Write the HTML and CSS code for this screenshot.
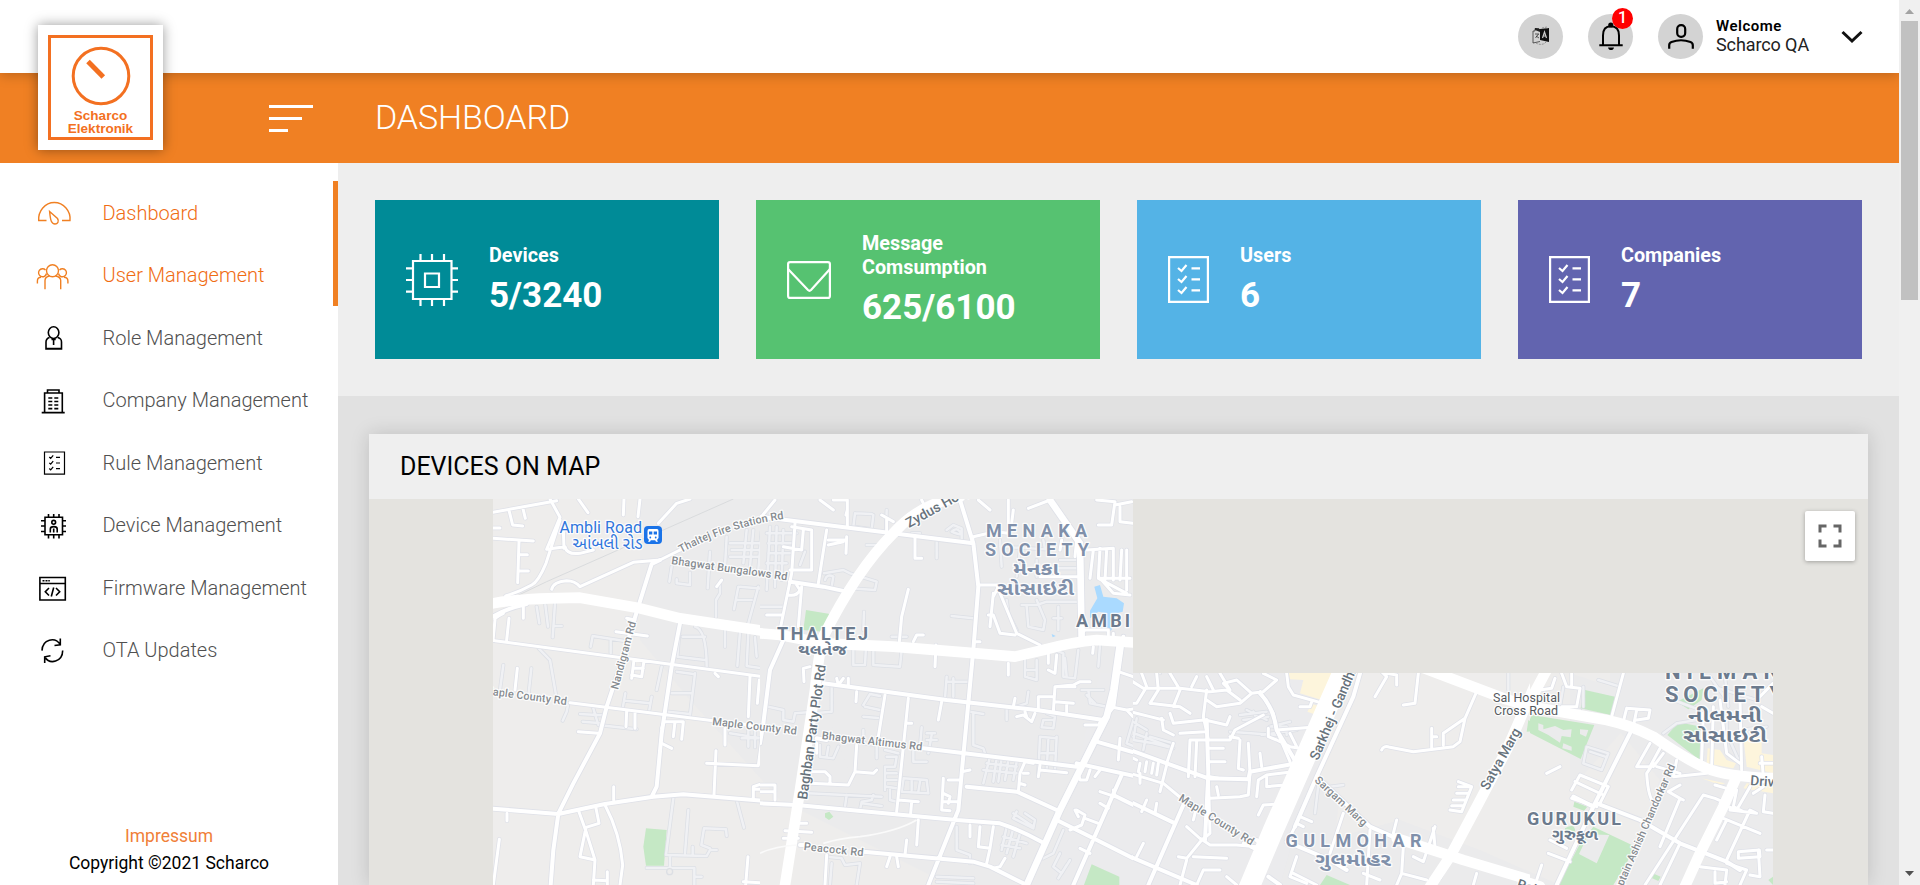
FILE: index.html
```html
<!DOCTYPE html>
<html lang="en">
<head>
<meta charset="utf-8">
<title>Dashboard</title>
<link rel="stylesheet" href="styles.css">
</head>
<body>
<div class="window">
<div class="app">
  <header class="topbar">
    <div class="round">
      <svg width="45" height="45" viewBox="0 0 45 45" fill="none" stroke="#222" stroke-width=".7">
        <path d="M22 15l9-1v14l-9-2z" fill="#111" stroke="none"/>
        <path d="M24.5 24l2-6 2 6M25.2 22h2.6" stroke="#ccc" stroke-width="1.2"/>
        <path d="M21 14.500h-4v2.500h-2v12l7-1.500M17 14.500l5 2M17 20h4M17.500 24l3-4M18 22l3 2" />
        <path d="M17 14l5 1v3l-5-2z" fill="#222" stroke="none"/>
        <path d="M24 14l5-1v2M18 29c3 2 8 2 10-1" stroke-dasharray="2 1" stroke="#777"/>
      </svg>
    </div>
    <div class="round">
      <svg width="45" height="45" viewBox="0 0 45 45" fill="none" stroke="#000" stroke-width="2">
        <circle cx="22.800" cy="11" r="1.600" fill="#000"/>
        <path d="M15 31V21.500C15 15 18 12.300 22.800 12.300S31 15 31 21.500V31M11.300 31.200H34.700"/>
        <path d="M20 33.500h6c-.5 2-1.500 2.500-3 2.500s-2.500-.5-3-2.500z" fill="#000" stroke="none"/>
      </svg>
      <span class="badge">1</span>
    </div>
    <div class="round">
      <svg width="45" height="45" viewBox="0 0 45 45" fill="none" stroke="#000" stroke-width="2.200">
        <rect x="19.200" y="11.200" width="8" height="11.600" rx="3.800"/>
        <path d="M11.200 34.700V31.200C11.200 29.500 12 28.600 13.500 28C19 26 27 26 32.500 28C34 28.600 34.800 29.500 34.800 31.200V34.700"/>
      </svg>
    </div>
    <div class="who"><b>Welcome</b><span>Scharco QA</span></div>
    <svg class="chev" width="22" height="14" viewBox="0 0 22 14" fill="none" stroke="#111" stroke-width="3"><path d="M1.500 2L11 11L20.500 2"/></svg>
  </header>
  <div class="titlebar">
    <div class="burger"><i></i><i></i><i></i></div>
    <h1>DASHBOARD</h1>
  </div>
  <div class="logo">
    <div class="logo-box">
      <svg width="60" height="60" viewBox="0 0 60 60" fill="none" stroke="#f37021">
        <circle cx="30" cy="30" r="27.800" stroke-width="3"/>
        <path d="M17 15.500L32.300 31" stroke-width="5"/>
      </svg>
      <span>Scharco</span><span>Elektronik</span>
    </div>
  </div>

  <div class="body">
    <aside class="side">
      <nav>
        <a class="on"><svg width="36" height="36" viewBox="0 0 36 36"><path d="M10.500 26.500H2.700C2 17 9 8.500 18.300 8.500S35 17 34 26.500H26"/><path d="M13.600 17.500L21.500 24.500C23.500 27.500 21.500 30 19 30C15.500 30 14.500 27 13.600 17.500Z"/></svg><span>Dashboard</span></a>
        <a class="on"><svg width="36" height="36" viewBox="0 0 36 36"><circle cx="16.500" cy="13.800" r="6"/><path d="M10.500 16.500A4 4 0 1 1 9.500 13M22.500 16.500A4 4 0 1 0 23.500 13M1.400 26.600V24C1.400 21 3 20.300 5 20.200M9 32.300V23.500C9 20.500 10.500 19.600 13.500 19M31.900 26.600V24C31.900 21 30 20.300 28 20.200M24.700 32.300V23.500C24.700 20.500 22.500 19.600 19.500 19"/></svg><span>User Management</span></a>
        <a><svg class="k" width="36" height="36" viewBox="0 0 36 36"><ellipse cx="17.600" cy="13.600" rx="5.300" ry="5.900"/><path d="M13.500 18.500C10.500 19.500 10 20.500 10 23V30H25.500V23C25.500 20.500 25 19.500 21.800 18.500M15.500 20.500h4.200M17.600 21v5M10 29.500H25.500"/></svg><span>Role Management</span></a>
        <a><svg class="k" width="36" height="36" viewBox="0 0 36 36"><path d="M8.600 30V11H26.300V30M11.500 11V8H23V11M5.700 30.600H28.700"/><path d="M12.300 16h4M18.300 16h4M12.300 19.500h4M18.300 19.500h4M12.300 23h4M18.300 23h4M12.300 26.600h4M18.300 26.600h4"/></svg><span>Company Management</span></a>
        <a><svg class="k thin" width="36" height="36" viewBox="0 0 36 36"><path d="M8.500 8H28.500V30.200H8.500Z"/><path d="M13.300 13l1.400 1.400 2.500-3M13.300 18.800l1.400 1.400 2.500-3M13.300 24.500l1.400 1.400 2.500-3M20 13.300h4M20 19h4M20 24.700h4"/></svg><span>Rule Management</span></a>
        <a><svg class="k" width="36" height="36" viewBox="0 0 36 36"><path d="M9 10.300H26.500V27.800H9ZM12.500 10V7M17.700 10V7M23 10V7M12.500 28v3.500M17.700 28v3.500M23 28v3.500M9 13.700H5M9 19H5M9 24.500H5M26.500 13.700h3.500M26.500 19h3.500M26.500 24.500h3.500"/><circle cx="17.700" cy="15.300" r="1.900"/><path d="M14.300 25.500V22C14.300 18.800 21.200 18.800 21.200 22V25.500M17.700 21.500v4"/></svg><span>Device Management</span></a>
        <a><svg class="k" width="36" height="36" viewBox="0 0 36 36"><path d="M3.900 8.500H29.300V31H3.900ZM3.900 14.500H29.300M6.500 11.700h2M9.500 11.700h2M12.300 11.700h1.500M13 19L9.300 22.700L13 26.500M20 19L23.700 22.700L20 26.500M17.700 18.500L15.300 27.500"/></svg><span>Firmware Management</span></a>
        <a><svg class="k" width="36" height="36" viewBox="0 0 36 36"><path d="M6 18.600C6.500 7 19 4.500 24.300 12.500M24.300 6.600V12.800L18.500 13.500M26.700 18.600C26.500 30 14 33 8.700 25M8.700 31V24.800L14.500 23.800"/></svg><span>OTA Updates</span></a>
      </nav>
      <footer><span class="imp">Impressum</span><span>Copyright ©2021 Scharco</span></footer>
    </aside>

    <main>
      <section class="cards">
        <div class="card teal">
          <svg width="52" height="52" viewBox="0 0 52 52" stroke-width="2.200"><path d="M7 7H45.500V45H7ZM19 19.500H33V33H19ZM14.500 7V0M26 7V0M38 7V0M14.500 45v7M26 45v7M38 45v7M7 14.300H0M7 26H0M7 37.700H0M45.500 14.300h6.500M45.500 26h6.500M45.500 37.700h6.500"/></svg>
          <div><p>Devices</p><strong>5/3240</strong></div>
        </div>
        <div class="card green">
          <svg width="44" height="38" viewBox="0 0 44 38" stroke-width="2.200"><rect x="1.100" y="1.100" width="41.800" height="35.800" rx="2"/><path d="M1 8L21 29Q22.500 30.500 24 29L43 8"/></svg>
          <div><p>Message<br>Comsumption</p><strong>625/6100</strong></div>
        </div>
        <div class="card blue">
          <svg width="41" height="47" viewBox="0 0 41 47" stroke-width="2.200"><path d="M1.100 1.100H39.900V45.900H1.100Z"/><path d="M10 12l3.500 3L18.500 9M10 23l3.500 3L18.500 20M10 34l3.500 3L18.500 31M23.500 12.300H32M23.500 23.300H32M23.500 34.300H32"/></svg>
          <div><p>Users</p><strong>6</strong></div>
        </div>
        <div class="card violet">
          <svg width="41" height="47" viewBox="0 0 41 47" stroke-width="2.200"><path d="M1.100 1.100H39.900V45.900H1.100Z"/><path d="M10 12l3.500 3L18.500 9M10 23l3.500 3L18.500 20M10 34l3.500 3L18.500 31M23.500 12.300H32M23.500 23.300H32M23.500 34.300H32"/></svg>
          <div><p>Companies</p><strong>7</strong></div>
        </div>
      </section>
      <section class="panel">
        <h2>DEVICES ON MAP</h2>
        <div class="map">
          <svg width="1499" height="386" viewBox="369 499 1499 386">
            <defs>
              <clipPath id="tiles"><path d="M493 499H1133V673H1773V885H493Z"/></clipPath>
              <clipPath id="ca"><path d="M493 499H760V885H493Z"/></clipPath>
              <clipPath id="cb"><path d="M760 499H1133V885H760Z"/></clipPath>
              <clipPath id="cc"><path d="M1133 673H1530V885H1133Z"/></clipPath>
              <clipPath id="cd"><path d="M1530 673H1773V885H1530Z"/></clipPath>
              <path id="thaltej" d="M681 553Q735 524 792 518"/>

              <path id="af" d="M430 795L420 870M514 805L506 880M536 745L570 780L588 885M530 620L538 670M556 615L564 680M585 610L578 712M580 678H605M692 740L698 708L790 722M752 722V760M905 800L890 870M796 880L788 925M796 902L870 910M875 890L868 930M625 910L620 935L608 962M660 942L725 946M668 965L725 970M700 925L715 975L830 988M960 672L952 770L1035 780M1005 680Q1040 690 1040 800M968 710H1035M1005 820L990 945M950 815L1000 822M935 880H995M925 935L990 942M1095 665V740M1140 695L1132 798M1165 700L1160 798L1225 808M1185 712L1190 770M1215 720V750M935 500L928 545M990 518V555L950 550V538M1050 455L1043 565M1080 545V580L1068 600V650M1135 560L1122 628M1130 600H1175M1195 560L1165 670M1100 410L1095 500M1160 390L1150 490M1180 390L1170 500M1205 395L1195 510M1110 430H1210M1115 450H1210M1110 470H1205M1225 520L1215 560M1140 560L1250 570M1225 910L1260 925M1130 1200L1152 1283M940 1195L918 1365L1040 1368L1050 1350H1070M985 1230L975 1360M998 1340V1362M1100 1308L1098 1288L1032 1285L1024 1335L1050 1345M860 1404H1003V1455M930 1370V1400M1003 1430H1025M1110 1000L1205 1015M1165 985V1040M1185 990V1042M1145 1015H1200"/>
              <path id="aw" d="M399 337L590 302M448 335L458 375L488 378M488 322L496 355M399 384H420M399 415L520 423M477 425L473 548M477 464H502M477 513H505M655 297L684 338M792 297L790 345M840 297L834 350M570 297L600 352L560 448L615 440Q620 465 660 460L700 450M600 360L558 490Q535 545 515 555Q480 575 437 588M610 390L612 445M990 297L950 310L895 370M1255 297L1215 345M575 568Q580 545 620 542Q645 542 660 560L820 487L900 480L960 450M430 640Q400 655 405 660L399 722M490 620V655M447 655L440 720M405 722L1225 832M768 695L862 708M800 655L825 660M472 805L465 870M630 908L1060 962M800 935L798 980M825 938V985M655 995L715 1000M822 780L815 835M852 782L845 830L815 825M820 805H850M905 985L912 965H970L965 1018M945 965L940 1010M905 1030L935 1045M1170 830L1165 950M1198 840L1192 910M1095 985V1035M1068 1052L1062 1185M1040 1090L1195 1097L1230 832M1070 560L1085 540M761 1160V1200M441 1240V1262M735 1215Q780 1300 788 1395L780 1455M655 1230L680 1300L705 1380L700 1455M708 1225L717 1270L678 1282L660 1370L705 1380M742 1415V1455M700 1440L742 1442M418 1318L400 1455M1164 1370L1157 1455M1150 1445L1255 1452M1225 650L1255 640M1180 1195V1160L1210 1150L1250 1160V1200M1180 1168H1250M1065 820L1075 830"/>
              <path id="am" d="M900 480L875 492L835 620L780 800L740 920L720 1000L640 1150L595 1241L580 1350L572 1455M960 670L935 800L905 1000L890 1160L875 1190M399 1226L595 1242L735 1212L880 1190L970 1183L1300 1210M1260 710L1225 832M399 650Q440 625 500 612"/>

              <path id="bf" d="M285 70L280 110L335 118L340 75M285 70L335 72M380 60L378 125M135 185L120 225M320 165L380 165M455 130H480M530 155V205M560 120L580 105L605 115V150M575 125Q590 110 600 125T575 125M192 250L250 240L270 250L350 275L345 300L270 295M195 270Q200 250 220 260L215 290M312 365L310 420M395 440H440M340 470V525L420 530L425 480M280 480V525L315 525L318 470M575 378L640 385M560 560L555 625M580 565V620M560 575H625M310 645L330 612L360 618M315 650L360 660M310 680L355 684M215 590V665L160 670M25 650L70 660V690L100 695L105 670L160 665M485 712L480 770M500 730H525M515 735L505 790M500 750H530M460 780V815H500M630 665L670 672M640 670V765L670 775L675 790M690 800L670 880M710 805L700 875M725 805L715 875M745 810L735 870M770 815L760 870M680 820L770 830M670 840L770 850M180 765V800L220 805L235 770M205 770L200 800M310 720V760L350 765V805M375 780L415 790M380 800H410L405 830H375M380 850H410M380 870H410M380 890L410 895M375 830V900M390 900V930L410 935M430 870L425 905L505 910L500 870L430 865M455 870V900M480 875L475 905M145 910L365 920M260 915L255 950M300 960L305 935L335 930L340 915M305 940L365 948M720 150L725 230M720 170L855 178L850 150M740 330L745 370L770 420M785 345H830L860 335H960M800 350L805 410L850 420L855 390L830 330M895 350V420M880 385H905M780 180L770 260M830 210V260M870 235H960M900 210H960M795 510V560L830 570V510M800 540H830M885 480L910 490V560L945 565L955 480M915 505L920 560M1020 465L1015 530M965 600H1030M985 600L990 640L1040 650M980 615L1005 640M740 650V690M770 650L800 640L805 605M860 670L885 680L880 715L845 712L850 690H880M840 740L835 850M890 740L885 840M840 740L890 745M865 750L860 840M845 790H885M590 1010V1080L630 1095V1120M200 1100L245 1105L255 1125L300 1120M215 1120L210 1185M300 1120L290 1185M530 1160L640 1165M530 1175L640 1180M760 970L820 1010M770 965L760 985L820 1015L825 990L795 970M740 1010L725 1080M760 1015L740 1090M780 1030L760 1100M730 1040L800 1060M725 1065L780 1075M910 1020L880 1090L850 1105M900 1090L880 1130L905 1150L930 1110M920 1125L895 1165M1120 690L1100 760L1150 780M1130 710L1175 725M1120 740L1160 750M30 110L20 300M50 110L45 290M70 120L65 270M20 130H110M25 160H100M25 190H90M20 220H80M0 350H70"/>
              <path id="bw" d="M45 30L0 85M180 30L220 60M220 30H262V110M262 60L258 75M365 75L400 95M380 85V125M465 140V205H485M485 30L495 50M200 120L175 280M260 140L258 190M205 150H260M205 165L250 155M105 100L95 250L60 420M95 110L155 120V240L90 240M130 120L125 180L70 170M110 285L120 300Q110 320 85 315M125 290L115 410M20 375H65M445 298L425 380L418 455M490 435H470L460 455M635 160L640 140L705 125L745 130L745 30M655 30L690 60M755 100L760 60M805 55L870 30M905 150L900 180M1010 30L1065 35L1055 105H1015M1065 45L1115 35M1080 50V95L1119 100M980 180L1060 175V270M1000 180L990 265M1020 175L1015 265L1100 310M1040 180L1035 270M1085 180L1080 270M1100 180V300M1020 265H1110M1020 265L1060 310L1110 315M655 285H710L770 430L840 465M685 375H700L720 430L765 435M700 310L690 410M715 290L700 320M840 260H965M945 200L950 150M965 430L975 420H1045V440M1060 430V450M645 455H660M528 465L525 530M132 575L130 535L150 530M745 520V555M865 480V520M890 495L885 550L865 540M1000 470L998 490M230 565L235 585L250 565M265 565V590M290 605L288 635M375 615L355 740M445 625L410 965M545 635L535 690M440 700H455M765 625L760 650M825 670L815 695L790 675L770 680M945 590H885L880 665M885 590L940 585L960 575H990M835 660V620H880M885 635L940 640M920 640V665M975 705H1020M1080 745L1075 810M170 760V790M290 765L285 845L265 885L150 880M285 845L340 850L350 840M150 845H195L210 860V880M0 885H45V930M0 905H45M550 865L545 960L570 962M565 870H600M550 910L570 920L565 940M550 935H595M605 845L630 840M415 930L475 935M455 935L452 970M820 820L795 815L780 850L775 905M840 825L835 860M840 840L920 848M780 880L795 885M805 850H790M795 665L800 680M118 1000H140M75 1022L155 1027M70 1045H115M475 990L470 1065M440 1050L435 1095M390 1100L380 1130M410 1100L415 1130M200 1095L195 1185M630 1005V1040M660 1010L655 1070L690 1075L700 1010M690 1075L680 1120M735 1105L720 1130L700 1135M955 850L960 870L980 870L990 840M1020 840L1005 860M950 960L975 975L965 1005L930 1020M945 960L955 980M1020 905L1065 920L1060 900M1020 940L1045 955M975 985L1015 1000M960 1075L990 1090M1170 930L1150 960M1145 1060L1120 1100M1075 545L1119 560L1155 590H1200M1130 600L1165 590L1190 620L1165 650L1100 660M1050 650L1100 660L1119 680L1200 690M1160 740L1140 800M1180 760L1160 830"/>
              <path id="bm" d="M0 80L640 160M90 275L190 290L260 305M600 30L640 160L655 290L640 480L605 850L595 960L575 1010L505 1185M190 580L560 630L830 660L1030 690M170 745L200 750M490 775L950 830M1010 755L1200 810M620 890L770 905L890 960M0 940L110 945L590 990L720 1000Q780 1020 850 1058M120 1065H140M310 1085L640 1115L690 1130L790 1180M70 450L30 540L10 700L0 760M950 820L1200 875M890 990L1000 1045L1200 1145M1060 915L1200 985M1085 855L940 1185M1090 440L1060 650L1020 700"/>
              <path id="bx" d="M870 30L960 160L965 445M1080 460L1060 600L1040 680L1000 760L900 960L800 1185"/>
              <path id="bl" d="M0 430L60 435M60 435L190 460L400 470L650 490L765 500L850 480Q940 455 1010 450L1125 458M600 20Q480 40 400 130Q290 240 190 440Q175 500 165 600L120 900L75 1185"/>

              <path id="cf" d="M300 275L440 285M330 225L410 215M340 240L415 230M350 210L410 240M370 215L380 235M420 260L480 245M395 285L500 270M0 240L50 270M0 275L120 320M20 235L10 300M50 280L40 330M60 290L130 310M70 310L130 325M10 300L70 310M90 40V100M1135 100V150M565 435L555 520M600 440L640 435M430 260H470V285"/>
              <path id="cw" d="M0 120L40 145L150 145L240 155L290 150L330 180M35 100L50 140L20 190H0M80 100L85 150L60 190M120 100L150 150L130 200M200 110L185 140M230 150L220 230L235 300M230 110L250 150M270 100L300 150L280 130L320 120L365 160L330 190L260 200L230 180M365 160L400 155L440 120L400 100M390 155L430 220L440 270L480 365M470 100L475 140L490 165L580 190M510 200H540L545 185M0 215L60 230L100 240M95 235L100 270L130 285M60 190L150 200L180 220M120 220L130 250L220 240M225 240L290 255L300 230M235 300H300L315 270L400 225M150 280L225 275M180 300L175 410M200 305L195 410M235 325H280M235 365H285M240 410L265 415M330 300L325 385L340 390M300 290L325 295M355 310L360 400L355 465L330 470L240 475M390 340L395 380M415 265V290L440 300L480 320L510 325L540 330M440 270L545 262M480 280L500 320M180 300H230M0 350L20 360M30 370L25 395M50 365L45 395M70 370L65 400M85 370L80 405M110 375L90 455M130 310L110 370M380 470L385 420L410 405L490 395M410 405V440L465 435M480 490L400 495L385 525M235 400L240 580L215 600L170 560M200 500L190 540M265 465L260 440M740 80L770 110L735 170M770 100L800 105V135M865 100L855 190L820 195M755 330Q760 315 780 322L850 335L970 320L990 305L1005 235M1005 235L1040 155M1005 235L940 280V315M905 265V325M905 290H920M985 425L1025 440L995 515L960 510M985 440H1020M980 460H1015M970 480H1005M965 497H1000M800 540L790 580M640 520L600 640M510 530L545 545M500 550L520 560M720 570L710 735M700 700L750 720M820 620L815 700L890 720M815 700L800 735M850 650L880 665L915 560M910 565L915 620M930 715L960 650M1040 700L1030 735M0 400L100 430L160 480M30 400V430M50 480L35 515M80 490L75 520M40 610L20 650M210 595L240 615H320L380 620M215 600L170 655L145 650M190 650L290 655M170 660L150 735M220 690H270M220 690L200 735M290 710L320 735M340 610L380 630M490 700L560 735M500 650L480 710L530 730M500 550L480 590"/>
              <path id="cm" d="M0 330L110 370L235 415L355 418L360 395L500 370M0 485L135 550M160 495L55 735M0 650L200 735M390 160Q430 200 440 270L500 370M380 600L400 620M470 605L600 660L650 690M230 240L235 400L225 600M415 710L450 735"/>
              <path id="cx" d="M690 100L670 170L560 410L495 560M560 410L720 560L800 595L960 650"/>

              <path id="df" d="M90 520L85 580M355 540L420 560M310 560V620M320 740L385 760L365 810L310 790ZM330 755L375 770M690 530L740 600M700 560L830 600M740 640V700L780 790M735 530L745 620M780 690L860 680M550 700L590 670L650 660M250 560L240 620L300 630M580 600L660 630"/>
              <path id="dw" d="M225 535L215 565L180 570M245 520L260 560L300 565L290 620L245 620M275 520V560M440 625L510 630L505 655L470 660M440 625L430 665M470 630L460 680M430 520L395 650M700 620L695 800M670 640L665 780M720 600L740 760L780 790M780 600L785 810M845 620L879 640M830 600L879 550M845 770L850 830M840 790H879M300 825L385 860L360 910M300 825L275 870M285 845L370 885M275 895L350 920M510 730L470 800H510L540 745M520 790L500 820Q505 900 525 910M590 780L580 830L680 820M530 800L600 820M520 800L550 760M600 855L565 875L600 895L540 1040M670 885L705 895L740 910M670 885L495 1155M600 895L610 900M730 955L840 1000M705 855L740 865M810 860L770 930L720 910M750 930L830 940L810 930L740 1080M710 1020L740 960M770 870L760 920L790 935M820 880L850 860M855 885L850 935L879 940M660 1100L740 1110L735 1155M705 1115V1150L740 1145M775 1075L840 1070L838 1050L775 1055ZM835 1050L840 1130L810 1125M860 1050H879M740 1090L800 1110L780 1155M600 1030L540 1155M205 1060L270 1085M210 1020L260 1045M185 1095L170 1140M200 820L240 800"/>
              <path id="dm" d="M450 700L340 920L230 1155M350 910L480 960L600 1030L740 1085L780 1110M0 1040L60 1020M280 890L340 920"/>
            </defs>

            <g clip-path="url(#tiles)">
              <path d="M493 499H1773V885H493Z" fill="#eeedec"/>
              <path d="M640 499H1133V640L1340 790L1330 885H950L780 800L690 700L640 640Z" fill="#ebebec"/>
              <path d="M760 499H1133V800H860L830 720H760Z" fill="#ebebec"/>
              <path d="M1100 673H1345L1290 885H1050Z" fill="#ebebed"/>
              <path d="M1610 673H1773V885H1620L1660 780L1610 720Z" fill="#ebebec"/>
              <path d="M1290 850L1400 820L1480 850L1560 885H1280ZM1570 673L1650 700L1570 790Z" fill="#ebebec"/>
            </g>

            <g clip-path="url(#ca)"><g transform="translate(360 400) scale(.33333)">
              <path class="park" d="M858 1285L920 1290L912 1397H858L850 1340Z"/>
              <path d="M399 622L560 545L1120 297" fill="none" stroke="#d9dbdd" stroke-width="3"/>
              <use href="#af" class="r fc"/><use href="#af" class="r ff"/>
              <use href="#aw" class="r wc"/><use href="#am" class="r mc"/>
              <use href="#aw" class="r wf"/><use href="#am" class="r mf"/>
              <path class="r lf" d="M399 610Q480 595 660 593L840 625L960 655L1260 700"/>
              <path class="r wf" d="M960 450L1040 415M1060 962L1255 985"/>
              <circle cx="929" cy="1415" r="9" fill="#eeedec" stroke="#dcdfe4" stroke-width="4"/>
            </g></g>

            <g clip-path="url(#cb)"><g transform="translate(760 490) scale(.33333)">
              <path class="park" d="M138 360L210 372L190 425L130 420ZM195 970L208 965L220 980L207 990L195 982ZM995 1123L1078 1160V1190H970Z"/>
              <path d="M1003 290L1020 285L1030 320L1070 325L1092 340L1088 365L1060 372L1055 420L1045 425L1030 410L1040 370L1015 365L990 385V362L1012 325Z" fill="#aadaff"/>
              <path d="M875 432L887 438L878 442Z" fill="#aadaff"/>
              <use href="#bf" class="r fc"/><use href="#bf" class="r ff"/>
              <use href="#bw" class="r wc"/><use href="#bm" class="r mc"/><use href="#bx" class="r xc"/>
              <use href="#bw" class="r wf"/><use href="#bm" class="r mf"/><use href="#bx" class="r xf"/>
              <use href="#bl" class="r lf"/>
              <path d="M0 1090Q40 1070 110 1065M190 1060Q240 1045 300 1040Q410 1025 470 990" fill="none" stroke="#fafafa" stroke-width="5"/>
            </g></g>

            <g clip-path="url(#cc)"><g transform="translate(1130 640) scale(.33333)">
              <path d="M475 99H615L575 180L510 160L520 120L480 118ZM545 192L575 200L560 225L532 215Z" fill="#fdf5dc"/>
              <path class="park" d="M590 705L660 735H570ZM1195 240L1250 270L1190 275Z"/>
              <use href="#cf" class="r fc"/><use href="#cf" class="r ff"/>
              <use href="#cw" class="r wc"/><use href="#cm" class="r mc"/><use href="#cx" class="r mc"/>
              <use href="#cw" class="r wf"/><use href="#cm" class="r mf"/><use href="#cx" class="r mf"/>
              <path class="r gf" d="M655 60L540 320L430 570L350 760"/>
              <path class="r lf" d="M870 80L1120 175L1200 200M1230 100L1130 330L1040 500L960 650L900 740M800 595L1000 660L1200 720"/>
            </g></g>

            <g clip-path="url(#cd)"><g transform="translate(1480 500) scale(.33333)">
              <path class="park" d="M315 570L405 590L392 645L302 625ZM155 645L343 675L302 777L137 692ZM590 605L620 590L670 565L665 600L625 628ZM562 705L595 667L665 680L662 782ZM283 905L322 920L312 932L280 920ZM340 980L462 1038L440 1090L400 1155H235L295 1040ZM515 1118L542 1130L535 1143L510 1132ZM80 1150H130L120 1160H75ZM255 985Q290 965 285 1005L255 1005ZM865 1140L879 1130V1155Z"/>
              <path d="M175 670L190 675V688L225 678L250 690L275 688L272 712L245 708L240 728L205 705L175 690ZM300 688L325 690L318 710L300 702ZM250 730L275 740V752L247 745Z" fill="#ebebec"/>
              <path d="M325 1003L388 1005L350 1090L297 1062Z" fill="#ebebec"/>
              <path d="M683 745L720 750L740 780L768 790L760 805L680 790ZM790 710L845 712L845 760L879 765V820L800 800ZM665 835L735 850L720 855ZM790 865L879 880V860L800 850Z" fill="#fdf5dc"/>
              <use href="#df" class="r fc"/><use href="#df" class="r ff"/>
              <use href="#dw" class="r wc"/><use href="#dm" class="r mc"/>
              <use href="#dw" class="r wf"/><use href="#dm" class="r mf"/>
              <path class="r lf" d="M-10 555L60 590L180 625L380 660Q450 675 520 710Q620 780 680 805Q740 830 890 835M200 510L130 640L0 900M770 830L730 920L660 1060L610 1170M-5 1100L90 1130L180 1160"/>
            </g></g>

            <g clip-path="url(#tiles)">
              <rect x="644" y="526" width="18" height="18" rx="4" fill="#1a73e8"/>
              <path d="M649 529h8q1.500 0 1.500 2v7l-1.500 2 1 1.800h-2l-.8-1.500h-4.400l-.8 1.500h-2l1-1.800-1.500-2v-7q0-2 1.500-2z" fill="#fff"/>
              <path d="M649 531.500h3.300v3H649zM653.700 531.500h3.300v3h-3.300z" fill="#1a73e8"/>
              <circle cx="650.300" cy="537.500" r=".9" fill="#1a73e8"/><circle cx="655.700" cy="537.500" r=".9" fill="#1a73e8"/>
              <g class="t station">
                <text x="559.500" y="533" textLength="82.500">Ambli Road</text>
                <text x="572.500" y="548.500" textLength="70" class="gu" lengthAdjust="spacingAndGlyphs">આંબલી રોડ</text>
              </g>
              <g class="t road">
                <text><textPath href="#thaltej">Thaltej Fire Station Rd</textPath></text>
                <text transform="translate(671 564) rotate(8)" textLength="117">Bhagwat Bungalows Rd</text>
                <text transform="translate(618 690) rotate(-75)" textLength="70">Nandigram Rd</text>
                <text transform="translate(483 694) rotate(7.500)" textLength="84">Maple County Rd</text>
                <text transform="translate(712 725) rotate(6.500)" textLength="85">Maple County Rd</text>
                <text transform="translate(821.500 739) rotate(6.500)" textLength="101">Bhagwat Altimus Rd</text>
                <text transform="translate(803.500 850) rotate(6)" textLength="60">Peacock Rd</text>
                <text transform="translate(1178 800) rotate(32)" textLength="86">Maple County Rd</text>
                <text transform="translate(1314 781) rotate(43)" textLength="67">Sargam Marg</text>
                <text transform="translate(1618 898) rotate(-66.500)" textLength="144">Captain Ashish Chandorkar Rd</text>
              </g>
              <g class="t major">
                <text transform="translate(909 528) rotate(-29)">Zydus Hosp</text>
                <text transform="translate(807 800) rotate(-82)" textLength="136">Baghban Party Plot Rd</text>
                <text transform="translate(1318 761) rotate(-67)" textLength="132">Sarkhej - Gandhinagar</text>
                <text transform="translate(1488 791) rotate(-61)" textLength="68">Satya Marg</text>
                <text x="1750" y="785" transform="rotate(4 1750 785)">Drive In Rd</text>
                <text transform="translate(1516 888) rotate(18)">Rajpath Rd</text>
              </g>
              <g class="t place">
                <text x="1493" y="702" textLength="67">Sal Hospital</text>
                <text x="1494" y="714.500" textLength="64">Cross Road</text>
              </g>
              <g class="t area">
                <text x="986" y="537" textLength="101">MENAKA</text>
                <text x="985" y="555.500" textLength="104">SOCIETY</text>
                <text x="1013" y="574.500" class="gu" textLength="46" lengthAdjust="spacingAndGlyphs">મેનકા</text>
                <text x="997" y="595" class="gu" textLength="77" lengthAdjust="spacingAndGlyphs">સોસાઇટી</text>
                <text x="1285.500" y="846.500" textLength="136">GULMOHAR</text>
                <text x="1315" y="866" class="gu" textLength="76" lengthAdjust="spacingAndGlyphs">ગુલમોહર</text>
              </g>
              <g class="t area dark">
                <text x="777" y="639.500" textLength="91">THALTEJ</text>
                <text x="798" y="655" class="gu small" textLength="49" lengthAdjust="spacingAndGlyphs">થલતેજ</text>
                <text x="1076" y="626.500" textLength="84">AMBIKA</text>
                <text x="1665" y="679" textLength="114" class="big">NILMAN</text>
                <text x="1665" y="701.500" textLength="118" class="big">SOCIETY</text>
                <text x="1688" y="721.500" class="gu" textLength="74" lengthAdjust="spacingAndGlyphs">નીલમની</text>
                <text x="1683" y="741.500" class="gu" textLength="84" lengthAdjust="spacingAndGlyphs">સોસાઇટી</text>
                <text x="1527" y="825" textLength="94">GURUKUL</text>
                <text x="1552" y="840" class="gu small" textLength="46" lengthAdjust="spacingAndGlyphs">ગુરુકૂળ</text>
              </g>
            </g>
          </svg>
          <button class="full"><svg width="24" height="24" viewBox="0 0 24 24" fill="none" stroke="#666" stroke-width="3"><path d="M2 8.500V2H8.500M15.500 2H22V8.500M22 15.500V22H15.500M8.500 22H2V15.500"/></svg></button>
        </div>
      </section>
    </main>
  </div>
</div>
<div class="scroll">
  <svg width="21" height="21" viewBox="0 0 21 21"><path d="M6 14L10.500 9L15 14Z" fill="#a3a3a3"/></svg>
  <div class="thumb"></div>
  <svg class="down" width="21" height="21" viewBox="0 0 21 21"><path d="M6 7L10.500 12L15 7Z" fill="#505050"/></svg>
</div>
</div>
</body>
</html>
```
FILE: styles.css
```css
* { box-sizing: border-box; }
body { margin: 0; font-family: Roboto, "Liberation Sans", sans-serif; color: #000; }
h1, h2, p { margin: 0; font-weight: 400; }
.window { display: flex; height: 885px; overflow: hidden; }
.app { position: relative; width: 1899px; height: 885px; display: flex; flex-direction: column; background: #fff; overflow: hidden; }

.topbar { flex: none; height: 73px; padding-right: 36px; display: flex; align-items: center; justify-content: flex-end; background: #fff; box-shadow: 0 2px 12px rgba(0,0,0,.22); z-index: 1; }
.round { position: relative; width: 45px; height: 45px; margin-right: 25px; border-radius: 50%; background: #d3d3d3; }
.round svg { display: block; }
.badge { position: absolute; right: 0; top: -6px; width: 21px; height: 21px; border-radius: 50%; background: #f00; color: #fff; font-size: 16px; font-weight: 500; line-height: 20px; text-align: center; }
.who { display: flex; flex-direction: column; width: 125px; margin-left: -12px; padding-bottom: 2px; font-size: 18px; line-height: 20px; }
.who b { font-size: 15px; font-weight: 600; line-height: 18px; letter-spacing: .5px; }
.who span { font-weight: 400; letter-spacing: -.1px; color: #222; }

.titlebar { flex: none; height: 90px; padding-left: 269px; display: flex; align-items: center; background: #f08023; }
.burger { width: 106px; display: flex; flex-direction: column; gap: 9px; }
.burger i { height: 3px; width: 44px; background: #fff; }
.burger i:nth-child(2) { width: 33px; }
.burger i:nth-child(3) { width: 19px; }
h1 { padding-bottom: 2px; color: #fff; font-size: 34px; font-weight: 300; line-height: 40px; letter-spacing: -.1px; }

.logo { position: absolute; z-index: 2; left: 38px; top: 25px; width: 125px; height: 125px; padding: 10px; background: #fff; box-shadow: 0 0 12px rgba(0,0,0,.4); }
.logo-box { height: 105px; border: 3px solid #f37021; padding-top: 8px; display: flex; flex-direction: column; align-items: center; font: bold 13.5px/13px "Liberation Sans", Arial, sans-serif; color: #f37021; }
.logo-box svg { margin-bottom: 3px; flex: none; }

.body { flex: 1; display: flex; min-height: 0; }
.side { width: 338px; display: flex; flex-direction: column; padding-top: 18px; background: #fff; }
.side a { height: 62.5px; padding-left: 36px; display: flex; align-items: center; gap: 30.5px; font-size: 20px; font-weight: 300; color: #505050; }
.side a span { padding-top: .9px; }
.side a.on { color: #f06c13; border-right: 5px solid #f08023; }
.side a svg { fill: none; stroke: #f08023; stroke-width: 1.4; flex: none; }
.side a svg.k { stroke: #000; stroke-width: 1.6; }
.side a svg.thin { stroke-width: 1.2; }
.side footer { margin-top: auto; padding-bottom: 8px; display: flex; flex-direction: column; text-align: center; font-size: 17.5px; line-height: 27px; }
.imp { color: #f08038; }

main { flex: 1; min-width: 0; background: #e1e1e1; }
.cards { height: 233px; padding: 37px; display: grid; grid-template-columns: repeat(4, 344px); gap: 37px; background: #eee; }
.card { display: flex; align-items: center; gap: 31px; padding-left: 31px; color: #fff; }
.card svg { fill: none; stroke: #fff; flex: none; }
.card p { font-size: 19.8px; font-weight: 700; line-height: 24px; }
.card strong { display: block; margin-top: 8px; font-size: 35px; line-height: 40px; }
.teal { background: #008b97; }
.green { background: #56c271; }
.blue { background: #54b3e6; }
.violet { background: #6264af; }

.panel { margin: 38px 31px 0; height: 451px; background: #efefef; box-shadow: 0 0 18px rgba(0,0,0,.15); }
h2 { height: 65px; padding-left: 31px; font-size: 25px; line-height: 65px; }
.map { position: relative; height: 386px; background: #e4e3df; }
.map svg { display: block; }
.full { position: absolute; right: 13px; top: 12px; width: 50px; height: 50px; padding: 0; border: 0; border-radius: 2px; background: #fff; box-shadow: 0 1px 4px rgba(0,0,0,.3); display: grid; place-items: center; }

.r { fill: none; stroke-linecap: round; stroke-linejoin: round; }
.fc { stroke: #dcdfe5; stroke-width: 12; }
.ff { stroke: #f0f1f4; stroke-width: 7.5; }
.wc { stroke: #dfe1e8; stroke-width: 13.5; }
.wf { stroke: #fff; stroke-width: 9; }
.mc { stroke: #dfe1e8; stroke-width: 17; }
.mf { stroke: #fff; stroke-width: 12; }
.xc { stroke: #dfe1e8; stroke-width: 25; }
.xf { stroke: #fff; stroke-width: 20; }
.lf { stroke: #fff; stroke-width: 32; }
.gf { stroke: #fff; stroke-width: 62; }
.park { fill: #c5e8c5; }
.t { paint-order: stroke; stroke: #fff; stroke-opacity: .85; stroke-width: 2.5px; stroke-linejoin: round; font-family: Roboto, "Noto Sans Gujarati", "Noto Sans", sans-serif; }
.station { fill: #3076dd; font-size: 16px; }
.road { fill: #868b90; font-size: 11px; font-weight: 500; }
.major { fill: #68737c; font-size: 13.8px; font-weight: 500; }
.place { fill: #55595d; font-size: 12.5px; }
.area { fill: #8090aa; font-size: 18px; font-weight: 700; }
.dark { fill: #6c7b8e; }
.area .big { font-size: 22px; }
.gu { font-weight: 700; }
.area .small { font-size: 15.5px; }
.station .gu { font-weight: 400; }

.scroll { width: 21px; height: 885px; display: flex; flex-direction: column; background: #f0f0f0; }
.thumb { width: 17px; height: 279px; margin-left: 2px; background: #c1c1c1; }
.scroll .down { margin-top: auto; }
.scroll svg { flex: none; }
```
